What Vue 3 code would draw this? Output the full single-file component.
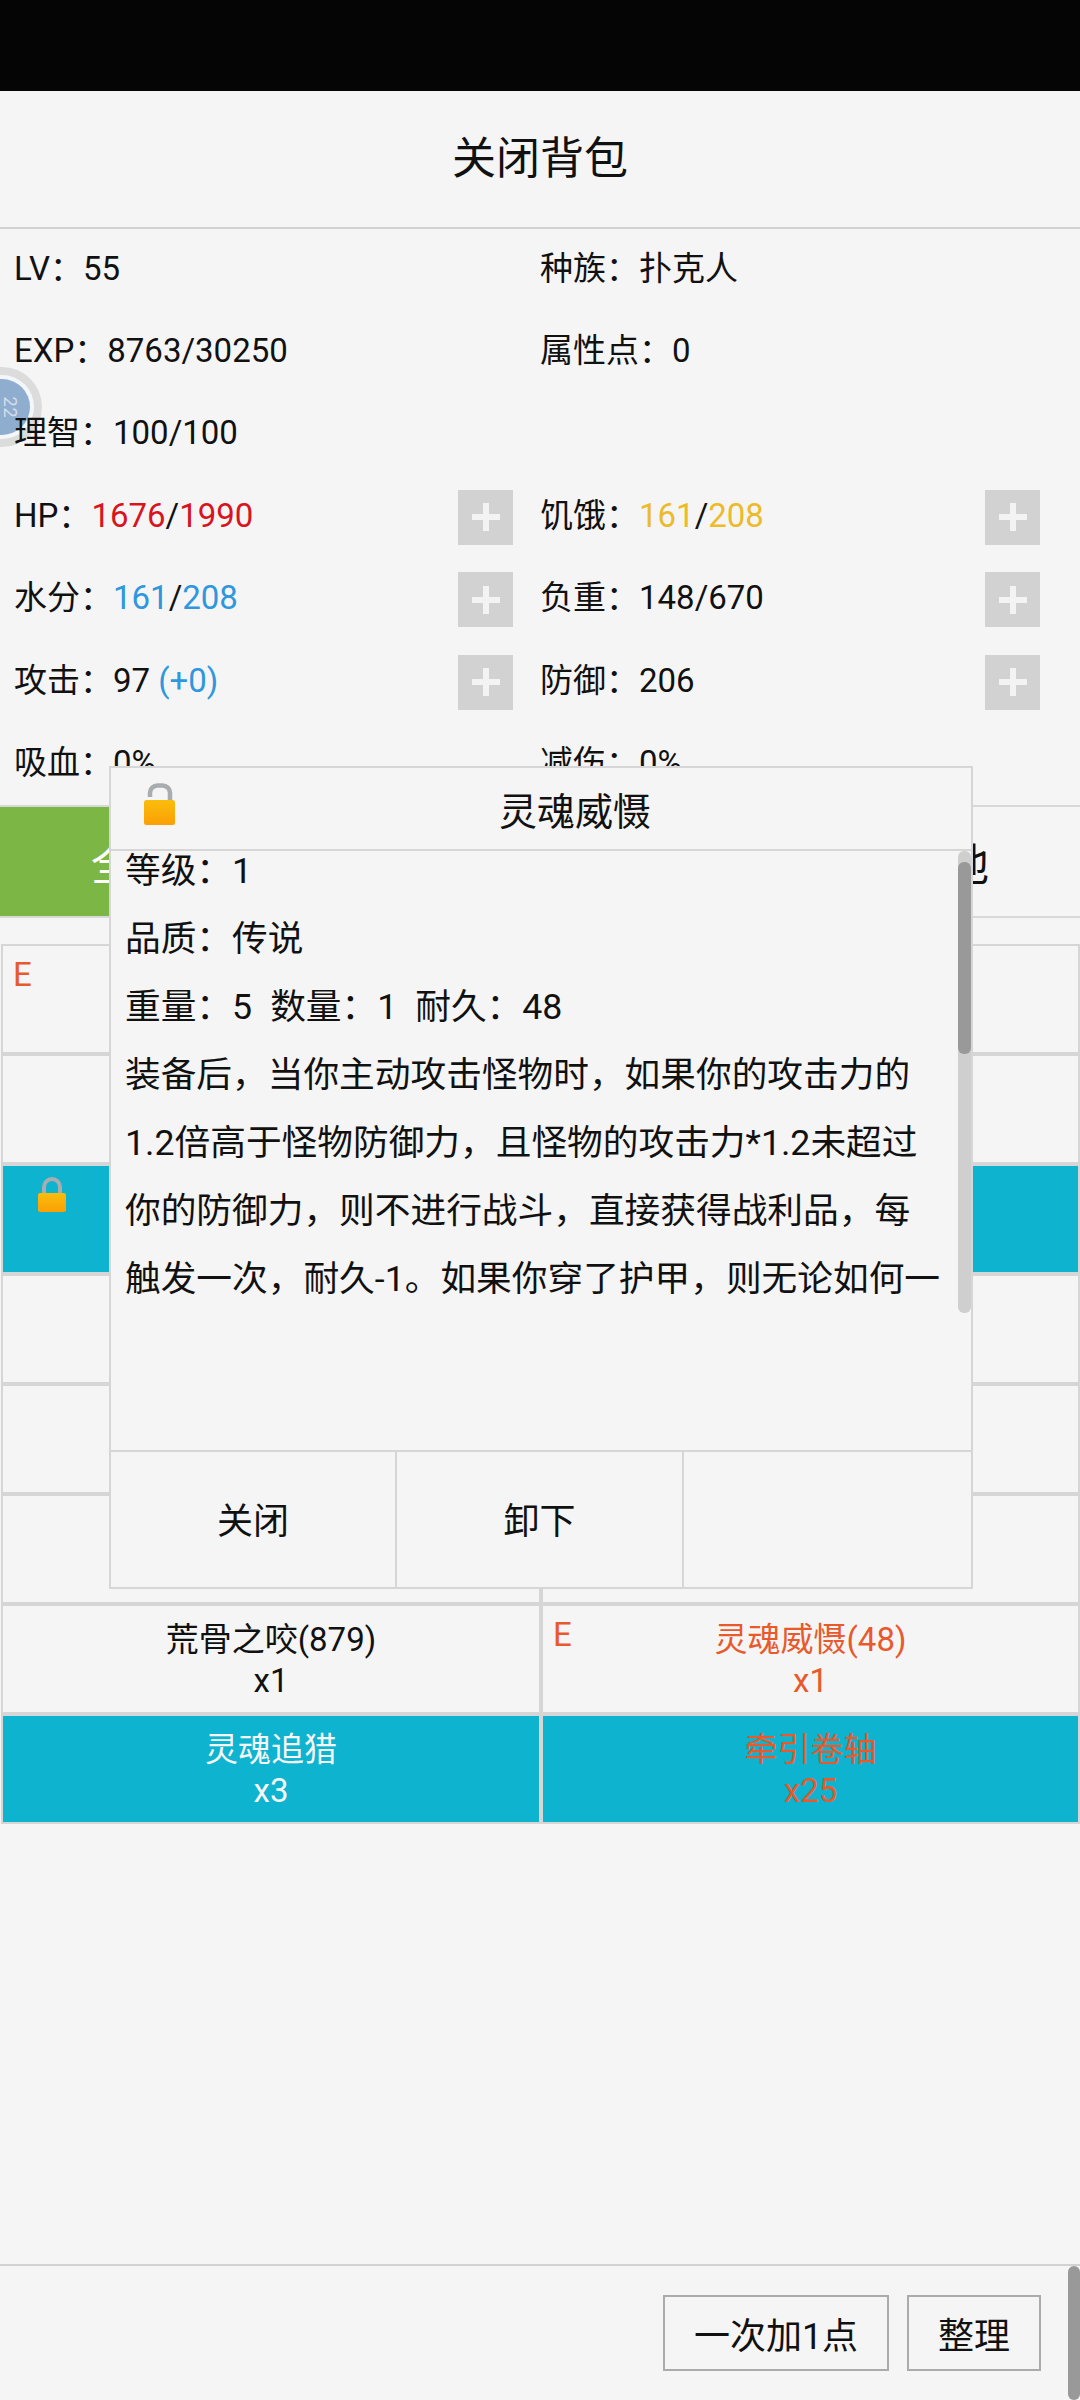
<script setup>
const rows = [
  { e: true }, {}, { teal: true, lock: true, tealRight: true }, {}, {}, {}
]
const tabs = ['全部', '', '', '其他']
</script>

<template>
  <div class="page">
    <div class="status"></div>
    <div class="title">关闭背包</div>

    <div class="stats">
      <div class="stat"><span>LV&#xFF1A;55</span></div>
      <div class="stat"><span>种族&#xFF1A;扑克人</span></div>
      <div class="stat"><span>EXP&#xFF1A;8763/30250</span></div>
      <div class="stat"><span>属性点&#xFF1A;0</span></div>
      <div class="stat"><span>理智&#xFF1A;100/100</span></div>
      <div class="stat"></div>
      <div class="stat"><span>HP&#xFF1A;<i class="red">1676</i>/<i class="red">1990</i></span><b class="plus"><svg viewBox="0 0 28 28"><path d="M14 0v28M0 14h28" /></svg></b></div>
      <div class="stat"><span>饥饿&#xFF1A;<i class="yellow">161</i>/<i class="yellow">208</i></span><b class="plus"><svg viewBox="0 0 28 28"><path d="M14 0v28M0 14h28" /></svg></b></div>
      <div class="stat"><span>水分&#xFF1A;<i class="blue">161</i>/<i class="blue">208</i></span><b class="plus"><svg viewBox="0 0 28 28"><path d="M14 0v28M0 14h28" /></svg></b></div>
      <div class="stat"><span>负重&#xFF1A;148/670</span><b class="plus"><svg viewBox="0 0 28 28"><path d="M14 0v28M0 14h28" /></svg></b></div>
      <div class="stat"><span>攻击&#xFF1A;97 <i class="blue">(+0)</i></span><b class="plus"><svg viewBox="0 0 28 28"><path d="M14 0v28M0 14h28" /></svg></b></div>
      <div class="stat"><span>防御&#xFF1A;206</span><b class="plus"><svg viewBox="0 0 28 28"><path d="M14 0v28M0 14h28" /></svg></b></div>
      <div class="stat"><span>吸血&#xFF1A;0%</span></div>
      <div class="stat"><span>减伤&#xFF1A;0%</span></div>
    </div>

    <div class="tabs">
      <div v-for="(t, i) in tabs" :key="i" class="tab" :class="{ active: i === 0 }">{{ t }}</div>
    </div>

    <div class="grid">
      <template v-for="(r, i) in rows" :key="i">
        <div class="cell" :class="{ teal: r.teal }">
          <em v-if="r.e" class="mark">E</em>
          <svg v-if="r.lock" class="lock-closed" viewBox="0 0 28 36">
            <defs>
              <linearGradient id="lockA" x1="0" y1="0" x2="0" y2="1">
                <stop offset="0" stop-color="#f9bd0c" />
                <stop offset="1" stop-color="#fc9f04" />
              </linearGradient>
            </defs>
            <path d="M6 19V11a8 8 0 0 1 16 0v8" fill="none" stroke="#a9adb0" stroke-width="4" />
            <rect x="0" y="17" width="28" height="19" rx="2" fill="url(#lockA)" />
          </svg>
        </div>
        <div class="cell" :class="{ teal: r.tealRight }"></div>
      </template>
      <div class="cell">
        <div>荒骨之咬(879)</div>
        <div>x1</div>
      </div>
      <div class="cell orange">
        <em class="mark">E</em>
        <div>灵魂威慑(48)</div>
        <div>x1</div>
      </div>
      <div class="cell teal white">
        <div>灵魂追猎</div>
        <div>x3</div>
      </div>
      <div class="cell teal orange">
        <div>牵引卷轴</div>
        <div>x25</div>
      </div>
    </div>

    <div class="spacer"></div>

    <div class="bottom">
      <div class="btn wide">一次加1点</div>
      <div class="btn">整理</div>
    </div>

    <div class="ball">
      <div class="ball-inner"><span>22</span></div>
    </div>
    <div class="page-bar"></div>

    <div class="modal">
      <div class="m-head">
        <svg class="lock-open" viewBox="0 0 32 42">
          <defs>
            <linearGradient id="lockB" x1="0" y1="0" x2="0" y2="1">
              <stop offset="0" stop-color="#f9bd0c" />
              <stop offset="1" stop-color="#fc9f04" />
            </linearGradient>
          </defs>
          <path d="M6 14V10a7.5 7.5 0 0 1 7.5 -7.5h5A7.5 7.5 0 0 1 26 10v10" fill="none" stroke="#a9adb0" stroke-width="4.5" />
          <rect x="0" y="17" width="31" height="25" rx="2.5" fill="url(#lockB)" />
        </svg>
        <span>灵魂威慑</span>
      </div>
      <div class="m-body">
        <div class="m-text">
          <p>等级&#xFF1A;1</p>
          <p>品质&#xFF1A;传说</p>
          <p><span class="sp">重量&#xFF1A;5</span><span class="sp">数量&#xFF1A;1</span><span>耐久&#xFF1A;48</span></p>
          <p>装备后&#xFF0C;当你主动攻击怪物时&#xFF0C;如果你的攻击力的</p>
          <p>1.2倍高于怪物防御力&#xFF0C;且怪物的攻击力*1.2未超过</p>
          <p>你的防御力&#xFF0C;则不进行战斗&#xFF0C;直接获得战利品&#xFF0C;每</p>
          <p>触发一次&#xFF0C;耐久-1。如果你穿了护甲&#xFF0C;则无论如何一</p>
        </div>
        <div class="track"><div class="thumb"></div></div>
      </div>
      <div class="m-gap"></div>
      <div class="m-foot">
        <div>关闭</div>
        <div>卸下</div>
        <div></div>
      </div>
    </div>
  </div>
</template>

<style>
html, body { margin: 0; padding: 0; background: #f5f5f5; }
</style>

<style scoped>
.page {
  position: relative;
  width: 1080px;
  height: 2400px;
  display: flex;
  flex-direction: column;
  overflow: hidden;
  background: #f5f5f5;
  color: #111;
  font-family: Roboto, "Noto Sans CJK SC", sans-serif;
  font-size: 33px;
}
.status { height: 91px; background: #050505; flex: none; }
.title {
  flex: none;
  display: flex;
  align-items: center;
  justify-content: center;
  font-size: 44px;
  border-bottom: 2px solid #d2d2d2;
  padding-bottom: 8px;
  box-sizing: border-box;
  height: 138px;
}
.stats {
  flex: none;
  display: grid;
  grid-template-columns: 540px 540px;
  grid-auto-rows: 82.4px;
  height: 579px;
  margin-top: -3px;
  box-sizing: border-box;
}
.stat {
  position: relative;
  z-index: 1;
  display: flex;
  align-items: center;
  justify-content: space-between;
  padding-right: 40px;
  padding-bottom: 3px;
  box-sizing: border-box;
}
.stat:nth-child(odd) { padding-left: 14px; padding-right: 27px; }
.stat i { font-style: normal; }
.red { color: #d8141e; }
.yellow { color: #ecbb2a; }
.blue { color: #2f97dd; }
.plus {
  width: 55px;
  height: 55px;
  margin-top: 9px;
  background: #d2d2d2;
  display: flex;
  align-items: center;
  justify-content: center;
}
.plus svg { width: 28px; height: 28px; }
.plus path { stroke: #f3f3f3; stroke-width: 6; fill: none; }
.tabs {
  flex: none;
  display: grid;
  grid-template-columns: repeat(4, 270px);
  height: 113px;
  box-sizing: border-box;
  border-top: 2px solid #d8d8d8;
  border-bottom: 2px solid #d8d8d8;
}
.tab {
  display: flex;
  align-items: center;
  justify-content: center;
  font-size: 44px;
}
.tab.active { background: #7cb644; color: #fff; }
.grid {
  flex: none;
  margin-top: 26px;
  padding-left: 1px;
  display: grid;
  grid-template-columns: 540px 539px;
  grid-auto-rows: 110px;
}
.cell {
  position: relative;
  box-sizing: border-box;
  border: 2px solid #d6d6d6;
  display: flex;
  flex-direction: column;
  align-items: center;
  justify-content: center;
  line-height: 41px;
  text-align: center;
  padding-top: 2px;
}
.teal { background: #0db3cf; }
.white { color: #f5f5f5; }
.orange { color: #e8592c; }
.mark {
  position: absolute;
  left: 10px;
  top: 8px;
  font-style: normal;
  color: #e8592c;
  font-size: 33px;
}
.lock-closed {
  position: absolute;
  left: 35px;
  top: 10px;
  width: 28px;
  height: 36px;
}
.spacer { flex: 1; }
.bottom {
  flex: none;
  height: 136px;
  box-sizing: border-box;
  border-top: 2px solid #d2d2d2;
  display: flex;
  justify-content: flex-end;
  gap: 18px;
  padding: 29px 39px 0 0;
}
.btn {
  width: 134px;
  height: 76px;
  box-sizing: border-box;
  border: 2px solid #ababab;
  display: flex;
  align-items: center;
  justify-content: center;
  font-size: 36px;
}
.btn.wide { width: 226px; }
.page-bar {
  position: absolute;
  right: 0;
  bottom: 0;
  width: 12px;
  height: 134px;
  background: #999;
  border-radius: 6px;
}
.ball {
  position: absolute;
  left: -38px;
  top: 367px;
  width: 80px;
  height: 80px;
  border-radius: 50%;
  background: #dcdcdc;
  display: flex;
  align-items: center;
  justify-content: center;
}
.ball-inner {
  width: 56px;
  height: 56px;
  border-radius: 50%;
  background: #8fadcf;
  box-shadow: 0 0 0 4px #f4f7fa;
  display: flex;
  align-items: center;
  justify-content: flex-end;
  padding-right: 15px;
  box-sizing: border-box;
  position: relative;
}
.ball-inner span {
  font-size: 18px;
  color: #d5dde8;
  letter-spacing: 1px;
  transform: rotate(90deg);
  transform-origin: center;
  margin-right: -6px;
}
.modal {
  position: absolute;
  left: 109px;
  top: 766px;
  width: 864px;
  height: 823px;
  z-index: 2;
  box-sizing: border-box;
  border: 2px solid #d6d6d6;
  background: #f5f5f5;
  display: flex;
  flex-direction: column;
}
.m-head {
  position: relative;
  flex: none;
  height: 83px;
  box-sizing: border-box;
  border-bottom: 2px solid #d6d6d6;
  display: flex;
  align-items: center;
  justify-content: center;
  padding-left: 68px;
  font-size: 38px;
}
.lock-open {
  position: absolute;
  left: 33px;
  top: 15px;
  width: 32px;
  height: 42px;
}
.m-body {
  position: relative;
  flex: none;
  height: 462px;
  overflow: hidden;
}
.m-text {
  margin: -14px 0 0 14px;
  width: 830px;
  font-size: 35.7px;
  line-height: 68px;
}
.m-text p { margin: 0; white-space: nowrap; }
.sp { margin-right: 18px; }
.track {
  position: absolute;
  right: 0;
  top: 0;
  width: 13px;
  height: 100%;
  background: #cfcfcf;
  border-radius: 6px;
}
.thumb {
  position: absolute;
  top: 11px;
  left: 0;
  width: 13px;
  height: 192px;
  background: #999;
  border-radius: 6px;
}
.m-gap { flex: 1; }
.m-foot {
  flex: none;
  height: 137px;
  box-sizing: border-box;
  border-top: 2px solid #d6d6d6;
  display: grid;
  grid-template-columns: 286px 287px 1fr;
  font-size: 36px;
}
.m-foot div {
  display: flex;
  align-items: center;
  justify-content: center;
  padding-bottom: 3px;
  border-right: 2px solid #d6d6d6;
}
.m-foot div:last-child { border-right: none; }
</style>
